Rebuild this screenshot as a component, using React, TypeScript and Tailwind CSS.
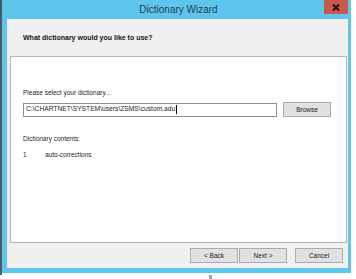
import React from 'react'

const font = { fontFamily: '"Liberation Sans", Arial, sans-serif' }

function WinButton({ label, className = '' }: { label: string; className?: string }) {
  return (
    <div
      className={`flex h-[15px] w-[48px] items-center justify-center border border-[#acacac] bg-[#e1e1e1] text-[6.5px] text-[#1a1a1a] ${className}`}
    >
      {label}
    </div>
  )
}

export default function App() {
  return (
    <div className="relative h-[279px] w-[356px] overflow-hidden bg-white" style={font}>
      <div className="flex">
        {/* left dark edge */}
        <div className="h-[275px] w-[2px] bg-[#4a5a60]" />
        {/* window frame */}
        <div className="flex h-[273px] w-[349px] flex-col bg-[#5ec6ec]">
          {/* title bar */}
          <div className="relative flex h-[19px] items-center justify-center">
            <span className="pl-[4px] text-[10px] text-[#253c55]">Dictionary Wizard</span>
            <div className="absolute right-[3px] top-0 flex h-[14px] w-[24px] items-center justify-center bg-[#c8574d]">
              <svg width="8" height="7" viewBox="0 0 8 7">
                <path d="M1 0.5 L7 6.5 M7 0.5 L1 6.5" stroke="#1e0e0e" strokeWidth="2" />
              </svg>
            </div>
          </div>
          {/* client area */}
          <div className="ml-[5px] mr-[3px] flex h-[249px] flex-col bg-[#f0f0f0]">
            <div className="flex h-[37px] items-center pl-[16px] pt-[2px]">
              <span className="text-[7px] font-bold text-[#141414]">What dictionary would you like to use?</span>
            </div>
            <div className="ml-[3px] mr-[1px] flex h-[187px] flex-col border border-[#b4b4b4] bg-white pl-[12px] text-[6.5px] text-[#1e1e1e]">
              <div className="mt-[31px] h-[10px] leading-[10px]">Please select your dictionary...</div>
              <div className="mt-[4px] flex items-center gap-[6px]">
                <div className="flex h-[14px] w-[254px] items-center border border-[#8e8f8f] bg-white pl-[2px] text-[6.7px]">
                  C:\CHARTNET\SYSTEM\users\ZSMS\custom.adu
                  <span className="ml-[1px] inline-block h-[9px] w-[1px] bg-black" />
                </div>
                <WinButton label="Browse" className="w-[47px]" />
              </div>
              <div className="mt-[17px] h-[10px] leading-[10px]">Dictionary contents:</div>
              <div className="mt-[6px] flex h-[10px] leading-[10px]">
                <span className="w-[22px]">1</span>
                <span>auto-corrections</span>
              </div>
            </div>
            <div className="flex flex-1 items-start justify-end pr-[5px] pt-[5px]">
              <WinButton label="< Back" />
              <WinButton label="Next >" className="ml-[1px]" />
              <WinButton label="Cancel" className="ml-[8px]" />
            </div>
          </div>
        </div>
      </div>
      {/* small mark below window */}
      <div className="ml-[209px] h-[4px] w-[3px] bg-[#9aa4aa]" />
    </div>
  )
}
